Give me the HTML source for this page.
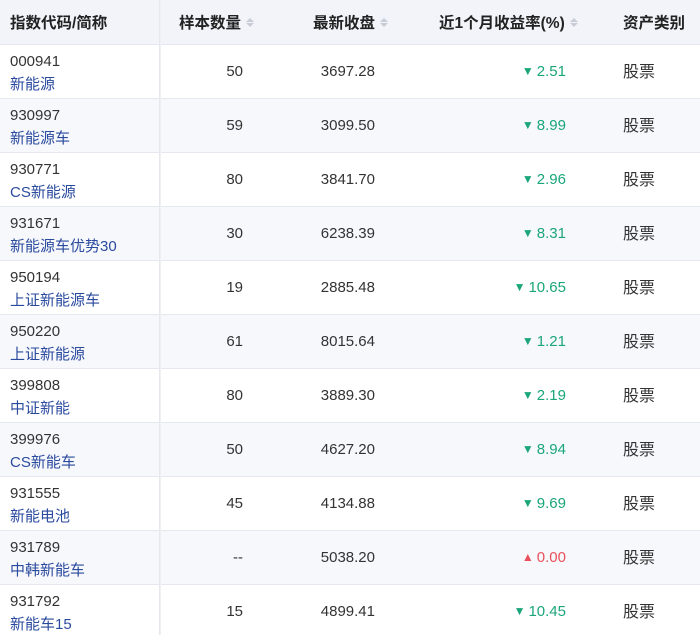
<!DOCTYPE html><html><head><meta charset="utf-8"><style>
body{margin:0;width:700px;height:635px;overflow:hidden;background:#fff;font-family:"Liberation Sans","Noto Sans CJK SC",sans-serif;color:#333;font-size:15px}
.h{position:absolute;top:0;left:0;width:700px;height:44px;background:#f2f4f9;font-weight:bold;font-size:15.5px;color:#222}
.h div,.r div{position:absolute}
.r{position:absolute;left:0;width:700px;height:54px;border-top:1px solid #e6e8ef;box-sizing:border-box}
.r.a{background:#f7f8fc}
.sh{position:absolute;left:159px;top:0;width:2px;height:635px;background:linear-gradient(90deg,#e2e4ea,#f3f4f7)}
.s{display:inline-block;width:8px;vertical-align:middle;margin-left:5px;position:relative;top:-1px}
.s:before,.s:after{content:"";display:block;border-left:4px solid transparent;border-right:4px solid transparent}
.s:before{border-bottom:4px solid #c8ccd6;margin-bottom:1px}.s:after{border-top:4px solid #c8ccd6}
.c{left:10px;top:5px;line-height:23px}.c span{color:#2a4a9e}
.n{right:457px;top:18px}.p{right:325px;top:18px}.q{right:134px;top:18px;color:#1aa67a}.q.u{color:#e8505b}
.t{left:623px;top:13px;font-size:16px}
.q i{font-style:normal;font-size:12px;margin-right:3px;position:relative;top:-1px}
</style></head><body>
<div class="h">
<div style="left:10px;top:11px">指数代码/简称</div>
<div style="left:179px;top:11px">样本数量<span class="s"></span></div>
<div style="left:313px;top:11px">最新收盘<span class="s"></span></div>
<div style="left:439px;top:11px">近1个月收益率(%)<span class="s"></span></div>
<div style="left:623px;top:11px">资产类别</div>
</div>
<div class="r" style="top:44px"><div class="c">000941<br><span>新能源</span></div><div class="n">50</div><div class="p">3697.28</div><div class="q"><i>▼</i>2.51</div><div class="t">股票</div></div>
<div class="r a" style="top:98px"><div class="c">930997<br><span>新能源车</span></div><div class="n">59</div><div class="p">3099.50</div><div class="q"><i>▼</i>8.99</div><div class="t">股票</div></div>
<div class="r" style="top:152px"><div class="c">930771<br><span>CS新能源</span></div><div class="n">80</div><div class="p">3841.70</div><div class="q"><i>▼</i>2.96</div><div class="t">股票</div></div>
<div class="r a" style="top:206px"><div class="c">931671<br><span>新能源车优势30</span></div><div class="n">30</div><div class="p">6238.39</div><div class="q"><i>▼</i>8.31</div><div class="t">股票</div></div>
<div class="r" style="top:260px"><div class="c">950194<br><span>上证新能源车</span></div><div class="n">19</div><div class="p">2885.48</div><div class="q"><i>▼</i>10.65</div><div class="t">股票</div></div>
<div class="r a" style="top:314px"><div class="c">950220<br><span>上证新能源</span></div><div class="n">61</div><div class="p">8015.64</div><div class="q"><i>▼</i>1.21</div><div class="t">股票</div></div>
<div class="r" style="top:368px"><div class="c">399808<br><span>中证新能</span></div><div class="n">80</div><div class="p">3889.30</div><div class="q"><i>▼</i>2.19</div><div class="t">股票</div></div>
<div class="r a" style="top:422px"><div class="c">399976<br><span>CS新能车</span></div><div class="n">50</div><div class="p">4627.20</div><div class="q"><i>▼</i>8.94</div><div class="t">股票</div></div>
<div class="r" style="top:476px"><div class="c">931555<br><span>新能电池</span></div><div class="n">45</div><div class="p">4134.88</div><div class="q"><i>▼</i>9.69</div><div class="t">股票</div></div>
<div class="r a" style="top:530px"><div class="c">931789<br><span>中韩新能车</span></div><div class="n">--</div><div class="p">5038.20</div><div class="q u"><i>▲</i>0.00</div><div class="t">股票</div></div>
<div class="r" style="top:584px"><div class="c">931792<br><span>新能车15</span></div><div class="n">15</div><div class="p">4899.41</div><div class="q"><i>▼</i>10.45</div><div class="t">股票</div></div>
<div class="sh"></div>
</body></html>
